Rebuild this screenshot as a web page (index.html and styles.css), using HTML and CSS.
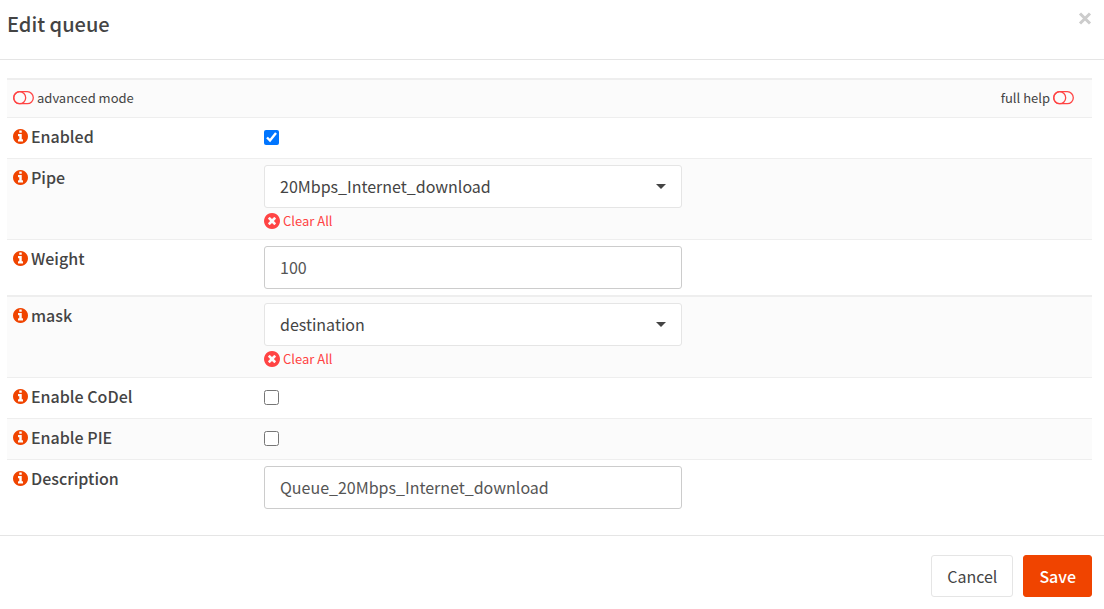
FILE: index.html
```html
<!DOCTYPE html>
<html lang="en">
<head>
  <meta charset="UTF-8">
  <meta name="viewport" content="width=device-width, initial-scale=1.0">
  <title>Edit queue</title>
  <link rel="stylesheet" href="styles.css">
</head>
<body>
  <!-- Shared icons -->
  <svg class="sprite" aria-hidden="true">
    <symbol id="icon-info" viewBox="0 128 1536 1536">
      <path d="M1024 1376v-160q0-14-9-23t-23-9h-96v-512q0-14-9-23t-23-9h-320q-14 0-23 9t-9 23v160q0 14 9 23t23 9h96v320h-96q-14 0-23 9t-9 23v160q0 14 9 23t23 9h448q14 0 23-9t9-23zm-128-896v-160q0-14-9-23t-23-9h-192q-14 0-23 9t-9 23v160q0 14 9 23t23 9h192q14 0 23-9t9-23zm640 416q0 209-103 385.5t-279.5 279.5-385.5 103-385.5-103-279.5-279.5-103-385.5 103-385.5 279.5-279.5 385.5-103 385.5 103 279.5 279.5 103 385.5z"/>
    </symbol>
    <symbol id="icon-clear" viewBox="0 128 1536 1536">
      <path d="M1149 1122q0-26-19-45l-181-181 181-181q19-19 19-45 0-27-19-46l-90-90q-19-18-46-18-26 0-45 18l-181 181-181-181q-19-18-45-18-27 0-46 18l-90 90q-19 19-19 46 0 26 19 45l181 181-181 181q-19 19-19 45 0 27 19 46l90 90q19 18 46 18 26 0 45-18l181-181 181 181q19 18 45 18 27 0 46-18l90-90q19-19 19-46zm387-226q0 209-103 385.5t-279.5 279.5-385.5 103-385.5-103-279.5-279.5-103-385.5 103-385.5 279.5-279.5 385.5-103 385.5 103 279.5 279.5 103 385.5z"/>
    </symbol>
    <symbol id="icon-toggle" viewBox="0 0 21 14">
      <rect x="0.7" y="0.7" width="19.6" height="12" rx="6"/>
      <circle cx="6.7" cy="6.7" r="6"/>
    </symbol>
  </svg>

  <form class="dialog" id="queue-form">
    <header class="dialog-header">
      <h1>Edit queue</h1>
      <button type="button" class="close" aria-label="Close">
        <svg viewBox="0 0 14 14"><path d="M2 1.5l10 10M12 1.5l-10 10"/></svg>
      </button>
    </header>

    <div class="dialog-body">
      <div class="row row-tools">
        <a href="#" class="tool"><svg class="toggle"><use href="#icon-toggle"/></svg>advanced mode</a>
        <a href="#" class="tool">full help<svg class="toggle"><use href="#icon-toggle"/></svg></a>
      </div>
      <div class="row">
        <label for="enabled"><svg class="info"><use href="#icon-info"/></svg>Enabled</label>
        <input type="checkbox" id="enabled" checked>
      </div>
      <div class="row">
        <label for="pipe"><svg class="info"><use href="#icon-info"/></svg>Pipe</label>
        <div class="field">
          <div class="select">
            <select id="pipe"><option>20Mbps_Internet_download</option></select>
          </div>
          <a href="#" class="clear"><svg><use href="#icon-clear"/></svg>Clear All</a>
        </div>
      </div>
      <div class="row">
        <label for="weight"><svg class="info"><use href="#icon-info"/></svg>Weight</label>
        <div class="field"><input type="text" id="weight" value="100"></div>
      </div>
      <div class="row row-section">
        <label for="mask"><svg class="info"><use href="#icon-info"/></svg>mask</label>
        <div class="field">
          <div class="select">
            <select id="mask"><option>destination</option></select>
          </div>
          <a href="#" class="clear"><svg><use href="#icon-clear"/></svg>Clear All</a>
        </div>
      </div>
      <div class="row">
        <label for="codel"><svg class="info"><use href="#icon-info"/></svg>Enable CoDel</label>
        <input type="checkbox" id="codel">
      </div>
      <div class="row">
        <label for="pie"><svg class="info"><use href="#icon-info"/></svg>Enable PIE</label>
        <input type="checkbox" id="pie">
      </div>
      <div class="row">
        <label for="description"><svg class="info"><use href="#icon-info"/></svg>Description</label>
        <div class="field"><input type="text" id="description" value="Queue_20Mbps_Internet_download"></div>
      </div>
    </div>

    <footer class="dialog-footer">
      <button type="button" class="btn">Cancel</button>
      <button type="submit" class="btn btn-primary">Save</button>
    </footer>
  </form>
</body>
</html>
```

FILE: styles.css
```css
* {
  box-sizing: border-box;
}
body {
  margin: 0;
  background: #fff;
  color: #444;
  font-family: "Noto Sans CJK SC", "Open Sans", sans-serif;
  font-size: 16px;
  line-height: 24px;
}
.sprite {
  display: none;
}
.dialog-header {
  display: flex;
  justify-content: space-between;
  align-items: flex-start;
  padding: 12px 12px 23px 7px;
  border-bottom: 1px solid #e5e5e5;
}
.dialog-header h1 {
  margin: 0;
  font-size: 20px;
  font-weight: 500;
  line-height: 24px;
}
.close {
  display: flex;
  padding: 0;
  border: 0;
  background: none;
  cursor: pointer;
}
.close svg {
  width: 14px;
  height: 14px;
  fill: none;
  stroke: #ccc;
  stroke-width: 3;
}
.dialog-body {
  padding: 18px 12px 20px 7px;
}
.row {
  display: grid;
  grid-template-columns: 251px 428px;
  align-items: start;
  min-height: 41px;
  padding: 6px;
  border-top: 1px solid #eee;
}
.row:nth-child(odd) {
  background: #fbfbfb;
}
.row-section,
.row-tools {
  border-top-width: 2px;
}
.row-tools {
  display: flex;
  justify-content: space-between;
  min-height: 39px;
  padding-right: 18px;
}
.tool {
  display: flex;
  align-items: center;
  gap: 3px;
  color: #444;
  font-size: 13px;
  text-decoration: none;
}
.toggle {
  width: 21px;
  height: 14px;
  fill: none;
  stroke: #ff4444;
  stroke-width: 1.3;
}
.row label {
  display: flex;
  align-items: center;
  gap: 3px;
  font-weight: 500;
}
.info {
  width: 15px;
  height: 15px;
  fill: #f04400;
}
.row input[type="checkbox"] {
  width: 15px;
  height: 15px;
  margin: 6px 0;
}
.field {
  width: 418px;
}
.field input,
.field select {
  display: block;
  width: 100%;
  height: 43px;
  padding: 0 15px 1px;
  border: 1px solid #ccc;
  border-radius: 3px;
  background: #fff;
  color: #555;
  font: inherit;
}
.field select {
  appearance: none;
  border-color: #e5e5e5;
  color: #444;
}
.select {
  position: relative;
}
.select::after {
  content: "";
  position: absolute;
  top: 19px;
  right: 16px;
  border: 5px solid transparent;
  border-top-color: #444;
  border-bottom: 0;
  pointer-events: none;
}
.clear {
  display: inline-flex;
  align-items: center;
  gap: 3px;
  margin-top: 1px;
  color: #ff4444;
  font-size: 13px;
  text-decoration: none;
  vertical-align: top;
}
.clear svg {
  width: 16px;
  height: 16px;
  fill: #ff4444;
}
.dialog-footer {
  display: flex;
  justify-content: flex-end;
  gap: 10px;
  padding: 19px 12px 12px;
  border-top: 1px solid #e5e5e5;
}
.btn {
  height: 42px;
  padding: 0 15px;
  border: 1px solid #e5e5e5;
  border-radius: 3px;
  background: #fff;
  color: #444;
  font: inherit;
  cursor: pointer;
}
.btn-primary {
  border-color: #f04400;
  background: #f04400;
  color: #fff;
  font-weight: 500;
}
```
